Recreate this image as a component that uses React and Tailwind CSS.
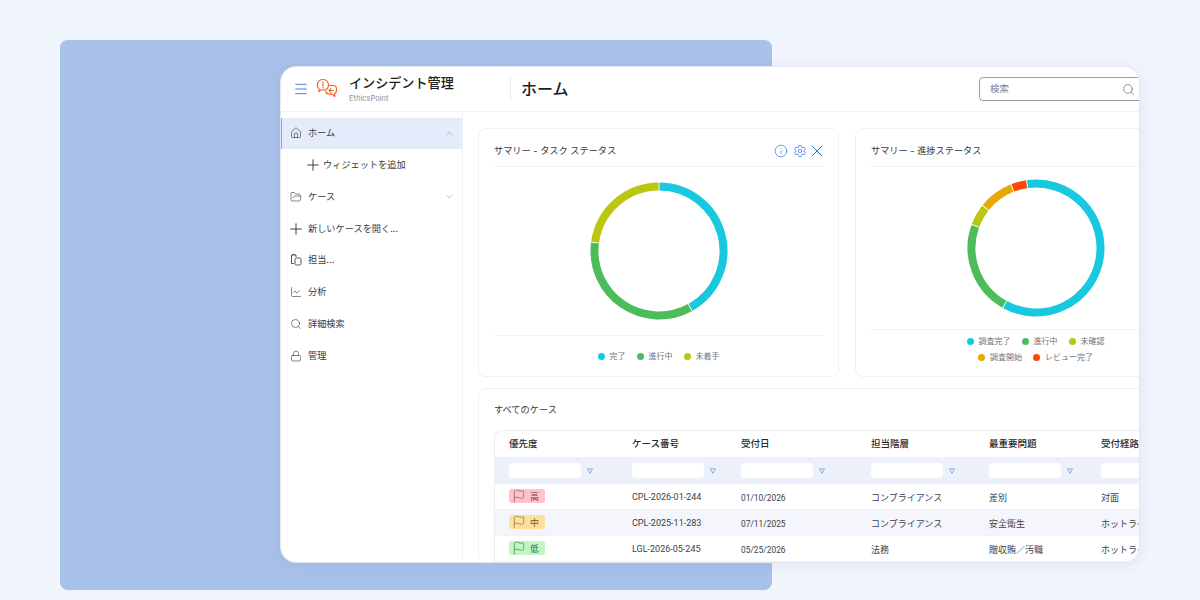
import React from 'react'
import { Menu, Home, ChevronUp, ChevronDown, Plus, FolderOpen, ChartLine, Search, Lock, Info, Settings, X, Flag } from 'lucide-react'

const font = { fontFamily: '"Inter", "Noto Sans CJK JP", sans-serif' }

const arc = (cx, cy, r, a, b) => {
  const pt = (d) => {
    const t = ((d - 90) * Math.PI) / 180
    return `${cx + r * Math.cos(t)} ${cy + r * Math.sin(t)}`
  }
  return `M ${pt(a)} A ${r} ${r} 0 ${b - a > 180 ? 1 : 0} 1 ${pt(b)}`
}

const Donut = ({ segments }) => (
  <svg width="140" height="140" viewBox="0 0 140 140">
    {segments.map(([a, b, color]) => (
      <path key={color} d={arc(70, 70, 64.5, a + 0.4, b - 0.4)} fill="none" stroke={color} strokeWidth="8" />
    ))}
  </svg>
)

const Logo = () => (
  <svg width="22" height="22" viewBox="0 0 22 22" fill="none" stroke="#f0642d" strokeWidth="1.2" strokeLinejoin="round" strokeLinecap="round">
    <path d="M7 1.5a5.5 5.5 0 0 1 3.5 9.7c-.7.6-1.8.8-3.5.8H4.6l-1.6 1.6v-2.7A5.5 5.5 0 0 1 7 1.5z" />
    <path d="M7 4v4M7 9.6v.4" />
    <path d="M12.5 7.5h4.5a3.5 3.5 0 0 1 3.5 3.5v1.5a3.5 3.5 0 0 1-1.8 3v3l-2.7-2.4h-3a3.5 3.5 0 0 1-3.3-2.6" />
    <path d="M17.5 12.5h-4.5M14.8 10.7l-1.8 1.8 1.8 1.8" />
  </svg>
)

const AssignIcon = () => (
  <svg width="12" height="12" viewBox="0 0 12 12" fill="none" stroke="#3f4450" strokeWidth="0.9" strokeLinejoin="round">
    <path d="M6 3V1H1.5v8.5H4" />
    <path d="M2.8 1V.5h1.8V1" />
    <rect x="5" y="4" width="6" height="7" rx="1.5" />
  </svg>
)

const Funnel = () => (
  <svg width="6" height="6" viewBox="0 0 6 6" fill="none" stroke="#7d9be0" strokeWidth="0.8" strokeLinejoin="round" className="shrink-0">
    <path d="M.5.8h5L3 5.4z" />
  </svg>
)

const NavItem = ({ icon, label, chevron, active, indent }) => (
  <div className={`flex h-[31.75px] items-center text-[9.2px] text-[#343842] ${active ? 'border-l border-[#8da3d8] bg-[#e5ebfa] pl-2' : 'pl-[9px]'} ${indent ? 'ml-[17px]' : ''}`}>
    <span className={`flex shrink-0 items-center ${indent ? 'w-[16px]' : 'w-[18px]'}`}>{icon}</span>
    <span>{label}</span>
    {chevron && <span className="ml-auto pr-[7px] text-[#6d717b]">{chevron}</span>}
  </div>
)

const Legend = ({ items, className = '' }) => (
  <div className={`flex justify-center gap-[11px] text-[8px] text-[#6f737d] ${className}`}>
    {items.map(([label, color]) => (
      <div key={label} className="flex items-center gap-[5px]">
        <span className="h-[7px] w-[7px] rounded-full" style={{ backgroundColor: color }} />
        {label}
      </div>
    ))}
  </div>
)

const CYAN = '#17c8de'
const GREEN = '#4dbd5c'
const YELLOW = '#bac60f'
const ORANGE = '#e9a800'
const RED = '#fb4a05'

const columns = [
  ['優先度', 'w-[123px]'],
  ['ケース番号', 'w-[109px]'],
  ['受付日', 'w-[130px]'],
  ['担当階層', 'w-[118px]'],
  ['最重要問題', 'w-[112px]'],
  ['受付経路', 'w-[100px]'],
]

const rows = [
  { level: '高', badge: 'bg-[#ffc2cb] text-[#8a3a48]', cells: ['CPL-2026-01-244', '01/10/2026', 'コンプライアンス', '差別', '対面'] },
  { level: '中', badge: 'bg-[#ffdf9e] text-[#7d5a12]', cells: ['CPL-2025-11-283', '07/11/2025', 'コンプライアンス', '安全衛生', 'ホットライン'], shaded: true },
  { level: '低', badge: 'bg-[#c2f5c4] text-[#2f6b37]', cells: ['LGL-2026-05-245', '05/25/2026', '法務', '贈収賄／汚職', 'ホットライン'] },
]

export default function App() {
  return (
    <div className="relative h-[600px] w-[1200px] overflow-hidden bg-[#f0f4fc] pl-[60px] pt-10" style={font}>
      <div className="h-[550px] w-[712px] rounded-lg bg-[#a8c1ea]" />

      <div className="absolute left-[280px] top-[66px] flex h-[497px] w-[860px] flex-col overflow-hidden rounded-2xl border border-[#e3e8f1] bg-white shadow-[0_2px_12px_rgba(120,140,180,0.15)]">
        <header className="flex h-[45px] shrink-0 items-center border-b border-[#eef1f8]">
          <Menu size={16} strokeWidth={1.4} className="ml-[12px] text-[#3f78d8]" />
          <div className="ml-[7px]"><Logo /></div>
          <div className="ml-[11px] w-[161px] pt-[2px]">
            <div className="text-[13.1px] font-medium leading-[18px] text-[#1b1d22]">インシデント管理</div>
            <div className="text-[7.5px] leading-[14px] text-[#8b8f99]">EthicsPoint</div>
          </div>
          <div className="h-[24px] w-px bg-[#e9ecf3]" />
          <div className="ml-[10px] text-[16px] font-medium text-[#1b1d22]">ホーム</div>
          <div className="ml-auto flex h-6 w-[170px] shrink-0 translate-x-[10px] items-center rounded-[4px] border border-[#9a9ea8] pl-[10px] text-[9.5px] text-[#7d818b]">
            検索
            <Search size={13} strokeWidth={1.1} className="ml-[113px] text-[#4b4f58]" />
          </div>
        </header>

        <div className="flex min-h-0 flex-1">
          <aside className="w-[182px] shrink-0 border-r border-[#eef1f8] pt-[5.5px]">
            <NavItem active icon={<Home size={12} strokeWidth={1.2} />} label="ホーム" chevron={<ChevronUp size={11} strokeWidth={1} />} />
            <NavItem indent icon={<Plus size={18} strokeWidth={1.3} className="ml-[-3px]" />} label="ウィジェットを追加" />
            <NavItem icon={<FolderOpen size={12} strokeWidth={1.2} />} label="ケース" chevron={<ChevronDown size={11} strokeWidth={1} />} />
            <NavItem icon={<Plus size={18} strokeWidth={1.3} className="ml-[-3px]" />} label="新しいケースを開く..." />
            <NavItem icon={<AssignIcon />} label="担当..." />
            <NavItem icon={<ChartLine size={12} strokeWidth={1.2} />} label="分析" />
            <NavItem icon={<Search size={12} strokeWidth={1.2} />} label="詳細検索" />
            <NavItem icon={<Lock size={12} strokeWidth={1.2} />} label="管理" />
          </aside>

          <main className="min-w-0 flex-1 overflow-hidden pl-[15px] pt-4">
            <div className="flex w-[740px] gap-4">
              <section className="h-[249px] w-[361px] shrink-0 rounded-lg border border-[#eef1f8] px-[15px]">
                <div className="flex h-[38px] items-center justify-between border-b border-[#eef1f8] pt-[6px] text-[9.2px] text-[#343842]">
                  サマリー - タスク ステータス
                  <div className="-mr-[4px] flex items-center text-[#2f6fe0]">
                    <Info size={14} strokeWidth={1.2} className="mr-[5px]" />
                    <Settings size={14} strokeWidth={1.2} />
                    <X size={20} strokeWidth={1.2} />
                  </div>
                </div>
                <div className="flex h-[169px] items-center justify-center border-b border-[#eef1f8]">
                  <Donut segments={[[0, 151, CYAN], [151, 277.5, GREEN], [277.5, 360, YELLOW]]} />
                </div>
                <Legend className="mt-[14px]" items={[['完了', CYAN], ['進行中', GREEN], ['未着手', YELLOW]]} />
              </section>

              <section className="h-[249px] w-[361px] shrink-0 rounded-lg border border-[#eef1f8] px-[15px]">
                <div className="flex h-[38px] items-center border-b border-[#eef1f8] pt-[6px] text-[9.2px] text-[#343842]">サマリー - 進捗ステータス</div>
                <div className="flex h-[163px] items-center justify-center border-b border-[#f0f1fa] pb-[1px]">
                  <Donut segments={[[352, 569, CYAN], [209, 290, GREEN], [290, 308.5, YELLOW], [308.5, 338.5, ORANGE], [338.5, 352, RED]]} />
                </div>
                <div className="flex flex-col gap-[4px] pt-[5px]">
                  <Legend items={[['調査完了', CYAN], ['進行中', GREEN], ['未確認', YELLOW]]} />
                  <Legend items={[['調査開始', ORANGE], ['レビュー完了', RED]]} />
                </div>
              </section>
            </div>

            <section className="mt-[11px] w-[740px] rounded-lg border border-[#eef1f8] px-[15px]">
              <div className="flex h-[41px] items-center text-[9.2px] text-[#343842]">すべてのケース</div>
              <div className="rounded-t-lg border border-b-0 border-[#e9edf6]">
                <div className="flex h-[26px] items-center pl-[14px] pt-[1px] text-[9.5px] font-medium text-[#26282e]">
                  {columns.map(([label, w]) => <div key={label} className={`${w} shrink-0`}>{label}</div>)}
                </div>
                <div className="flex h-[27px] items-center bg-[#ebf0fa] pl-[14px]">
                  {columns.map(([label, w]) => (
                    <div key={label} className={`${w} flex shrink-0 items-center gap-[6px]`}>
                      <div className="h-[15px] w-[72px] rounded-[4px] bg-white" />
                      <Funnel />
                    </div>
                  ))}
                </div>
                {rows.map((row) => (
                  <div key={row.level} className={`flex h-[26px] items-center border-b border-[#eef1f8] pl-[14px] pt-[3px] text-[9px] text-[#3c4048] ${row.shaded ? 'bg-[#f4f6fb]' : ''}`}>
                    <div className="w-[123px] shrink-0">
                      <span className={`inline-flex h-[14px] w-[36px] items-center gap-[4px] rounded-[3px] pl-[3px] text-[9px] ${row.badge}`}>
                        <Flag size={14} strokeWidth={1} />
                        {row.level}
                      </span>
                    </div>
                    {row.cells.map((c, i) => (
                      <div key={i} className={`${columns[i + 1][1]} shrink-0 whitespace-nowrap ${i === 0 ? "font-['Roboto'] text-[9px]" : ''} ${i === 1 ? "font-['Roboto'] text-[8.4px]" : ''}`}>{c}</div>
                    ))}
                  </div>
                ))}
              </div>
            </section>
          </main>
        </div>
      </div>
    </div>
  )
}
